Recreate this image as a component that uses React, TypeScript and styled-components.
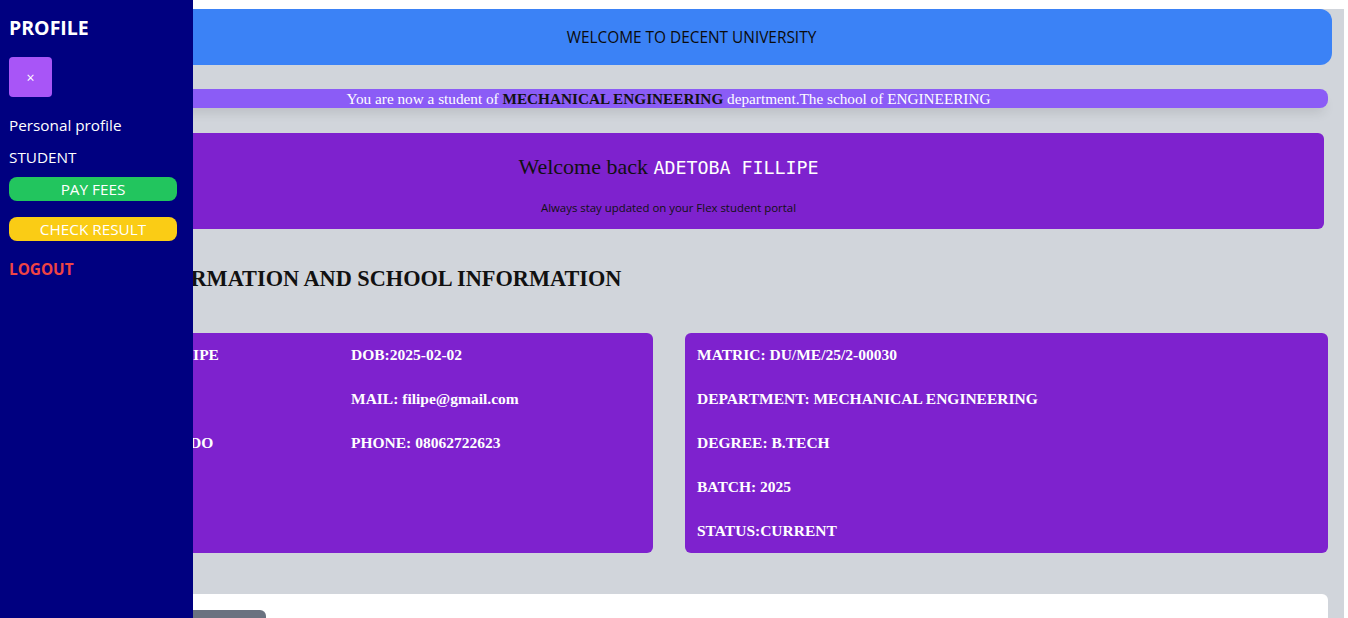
import React from "react";
import styled, { createGlobalStyle } from "styled-components";

const Global = createGlobalStyle`
  html, body { margin: 0; padding: 0; background: #ffffff; }
  body { font-family: "Open Sans", "Liberation Sans", sans-serif; }
`;

const Sidebar = styled.aside`
  position: fixed;
  top: 0;
  left: 0;
  bottom: 0;
  width: 193px;
  background: #000080;
  box-sizing: border-box;
  padding: 16px 16px 0 9px;
  display: flex;
  flex-direction: column;
  align-items: stretch;
  z-index: 10;
  color: #ffffff;
`;

const SideTitle = styled.h2`
  margin: 0;
  font-size: 19.5px;
  line-height: 24px;
  font-weight: 700;
`;

const CloseButton = styled.button`
  align-self: flex-start;
  margin-top: 17px;
  width: 43px;
  height: 40px;
  border: none;
  border-radius: 4px;
  background: #a855f7;
  color: #ffffff;
  font-size: 14px;
  font-family: "Open Sans", sans-serif;
  padding: 0;
`;

const SideText = styled.div<{ $top: number }>`
  margin-top: ${(p) => p.$top}px;
  font-size: 15.3px;
  line-height: 24px;
`;

const Pill = styled.button<{ $bg: string; $top: number }>`
  margin-top: ${(p) => p.$top}px;
  height: 24px;
  border: none;
  border-radius: 8px;
  background: ${(p) => p.$bg};
  color: #ffffff;
  font-family: "Open Sans", sans-serif;
  font-size: 15.3px;
  line-height: 24px;
  padding: 0;
`;

const Logout = styled.div`
  margin-top: 16px;
  font-size: 15.3px;
  line-height: 24px;
  font-weight: 700;
  color: #ef4444;
`;

const Main = styled.main`
  margin: 9px 4px 0 0;
  background: #d1d5db;
  padding: 0 16px 24px 9px;
  display: flex;
  flex-direction: column;
`;

const Banner = styled.header`
  height: 56px;
  margin-right: -4px;
  padding-left: 42px;
  border-radius: 12px;
  background: #3b82f6;
  display: flex;
  align-items: center;
  justify-content: center;
  font-family: "Open Sans", sans-serif;
  font-size: 15.4px;
  color: #0b0b0b;
`;

const Stripe = styled.div`
  margin-top: 24px;
  height: 19px;
  border-radius: 8px;
  background: #8b5cf6;
  box-shadow: 0 8px 12px -4px rgba(0, 0, 0, 0.12);
  display: flex;
  align-items: center;
  justify-content: center;
  font-family: "Liberation Serif", serif;
  font-size: 15.25px;
  color: #ffffff;
  white-space: nowrap;
  b { color: #111111; }
`;

const WelcomeCard = styled.section`
  margin: 25px 4px 0 4px;
  height: 96px;
  border-radius: 6px;
  background: #7e22ce;
  display: flex;
  flex-direction: column;
  align-items: center;
  padding-top: 21px;
  box-sizing: border-box;
`;

const WelcomeLine = styled.div`
  font-family: "Liberation Serif", serif;
  font-size: 22px;
  line-height: 26px;
  color: #111111;
`;

const Mono = styled.span`
  font-family: "DejaVu Sans Mono", monospace;
  font-size: 18.3px;
  color: #ffffff;
`;

const WelcomeSub = styled.div`
  margin-top: 19px;
  font-family: "Open Sans", sans-serif;
  font-size: 11.4px;
  line-height: 16px;
  color: #111111;
`;

const SectionTitle = styled.h2`
  margin: 36px 0 0 0;
  font-family: "Liberation Serif", serif;
  font-size: 22.3px;
  line-height: 28px;
  font-weight: 700;
  color: #111111;
  white-space: nowrap;
`;

const CardsGrid = styled.div`
  margin-top: 40px;
  display: grid;
  grid-template-columns: 1fr 1fr;
  gap: 32px;
  padding-left: 1px;
`;

const InfoCard = styled.div<{ $cols: string }>`
  height: 220px;
  border-radius: 6px;
  background: #7e22ce;
  padding: 0 12px;
  display: grid;
  grid-template-columns: ${(p) => p.$cols};
  grid-auto-rows: 44px;
  align-content: start;
`;

const Field = styled.div`
  display: flex;
  align-items: center;
  font-family: "Liberation Serif", serif;
  font-weight: 700;
  font-size: 15.5px;
  color: #ffffff;
  white-space: nowrap;
`;

const WhiteCard = styled.section`
  margin-top: 41px;
  height: 130px;
  border-radius: 6px;
  background: #ffffff;
  padding: 16px;
  box-sizing: border-box;
`;

const GrayButton = styled.button`
  width: 144px;
  height: 36px;
  border: none;
  border-radius: 6px;
  background: #6b7280;
  color: #ffffff;
  margin-left: 97px;
`;

const personal = [
  "NAME: ADETOBA FILLIPE",
  "DOB:2025-02-02",
  "GENDER: MALE",
  "MAIL: filipe@gmail.com",
  "STATE OF ORIGIN: ONDO",
  "PHONE: 08062722623",
];

const school = [
  "MATRIC: DU/ME/25/2-00030",
  "DEPARTMENT: MECHANICAL ENGINEERING",
  "DEGREE: B.TECH",
  "BATCH: 2025",
  "STATUS:CURRENT",
];

export default function App() {
  return (
    <>
      <Global />
      <Sidebar>
        <SideTitle>PROFILE</SideTitle>
        <CloseButton>×</CloseButton>
        <SideText $top={16}>Personal profile</SideText>
        <SideText $top={8}>STUDENT</SideText>
        <Pill $bg="#22c55e" $top={8}>PAY FEES</Pill>
        <Pill $bg="#facc15" $top={16}>CHECK RESULT</Pill>
        <Logout>LOGOUT</Logout>
      </Sidebar>
      <Main>
        <Banner>WELCOME TO DECENT UNIVERSITY</Banner>
        <Stripe>
          <span>
            You are now a student of <b>MECHANICAL ENGINEERING</b> department.The school of ENGINEERING
          </span>
        </Stripe>
        <WelcomeCard>
          <WelcomeLine>
            Welcome back <Mono>ADETOBA FILLIPE</Mono>
          </WelcomeLine>
          <WelcomeSub>Always stay updated on your Flex student portal</WelcomeSub>
        </WelcomeCard>
        <SectionTitle>PERSONAL INFORMATION AND SCHOOL INFORMATION</SectionTitle>
        <CardsGrid>
          <InfoCard $cols="329px 1fr">
            {personal.map((t) => (
              <Field key={t}>{t}</Field>
            ))}
          </InfoCard>
          <InfoCard $cols="1fr">
            {school.map((t) => (
              <Field key={t}>{t}</Field>
            ))}
          </InfoCard>
        </CardsGrid>
        <WhiteCard>
          <GrayButton />
        </WhiteCard>
      </Main>
    </>
  );
}
